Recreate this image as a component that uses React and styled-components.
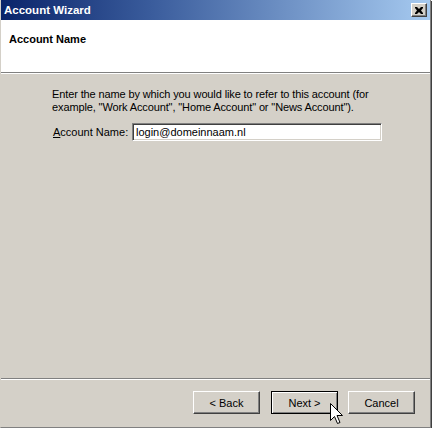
import React from "react";
import styled, { createGlobalStyle } from "styled-components";

const GlobalStyle = createGlobalStyle`
  html, body {
    margin: 0;
    padding: 0;
    background: #ffffff;
  }
  body {
    font-family: "Liberation Sans", Arial, sans-serif;
    font-size: 11px;
    color: #000;
  }
`;

const Window = styled.div`
  position: relative;
  width: 429px;
  height: 427px;
  display: flex;
  flex-direction: column;
  background: #d4d0c8;
  border-left: 1px solid #d4d0c8;
  border-right: 1px solid #808080;
  border-bottom: 1px solid #808080;
  box-shadow: 1px 1px 0 #404040;
`;

const TitleBar = styled.div`
  height: 20px;
  display: flex;
  align-items: center;
  justify-content: space-between;
  padding: 0 3px 0 3px;
  background: linear-gradient(to right, #0a246a 0%, #3a5c9c 35%, #a6caf0 100%);
`;

const Title = styled.span`
  color: #fff;
  font-weight: bold;
  font-size: 11.5px;
`;

const CloseButton = styled.div`
  width: 16px;
  height: 14px;
  box-sizing: border-box;
  background: #d4d0c8;
  border-top: 1px solid #fff;
  border-left: 1px solid #fff;
  border-right: 1px solid #404040;
  border-bottom: 1px solid #404040;
  box-shadow: inset -1px -1px 0 #808080;
  display: flex;
  align-items: center;
  justify-content: center;
`;

const Header = styled.div`
  height: 53px;
  box-sizing: border-box;
  background: #fff;
  padding: 13px 8px 0;
  border-bottom: 1px solid #808080;
  box-shadow: 0 1px 0 #fff;
`;

const HeaderTitle = styled.div`
  font-weight: bold;
  font-size: 11px;
`;

const Body = styled.div`
  flex: 1;
  padding: 15px 0 0 51px;
  display: flex;
  flex-direction: column;
`;

const Intro = styled.p`
  margin: 0;
  width: 340px;
  line-height: 13px;
  letter-spacing: -0.12px;
`;

const FieldRow = styled.div`
  display: flex;
  align-items: center;
  margin-top: 9px;
`;

const Label = styled.label`
  width: 79px;
  padding-left: 1px;
  span {
    text-decoration: underline;
  }
`;

const TextBox = styled.div`
  width: 250px;
  height: 18px;
  box-sizing: border-box;
  background: #fff;
  border-top: 1px solid #808080;
  border-left: 1px solid #808080;
  border-right: 1px solid #fff;
  border-bottom: 1px solid #fff;
  box-shadow: inset 1px 1px 0 #404040, inset -1px -1px 0 #d4d0c8;
  padding: 2px 3px;
  line-height: 13px;
`;

const Footer = styled.div`
  height: 49px;
  border-top: 1px solid #808080;
  box-shadow: inset 0 1px 0 #fff;
  display: flex;
  justify-content: flex-end;
  align-items: flex-start;
  padding: 12px 15px 0 0;
  box-sizing: border-box;
`;

const Button = styled.div`
  width: 67px;
  height: 23px;
  box-sizing: border-box;
  margin-left: ${(p) => p.$gap || 0}px;
  display: flex;
  align-items: center;
  justify-content: center;
  background: #d4d0c8;
  border-top: 1px solid ${(p) => (p.$default ? "#000" : "#fff")};
  border-left: 1px solid ${(p) => (p.$default ? "#000" : "#fff")};
  border-right: 1px solid #404040;
  border-bottom: 1px solid #404040;
  box-shadow: ${(p) =>
    p.$default
      ? "inset 1px 1px 0 #fff, inset -1px -1px 0 #808080"
      : "inset -1px -1px 0 #808080"};
  ${(p) => p.$default && "outline: 1px solid #000; outline-offset: -1px;"}
`;

const Cursor = styled.svg`
  position: absolute;
  left: 329px;
  top: 403px;
`;

export default function App() {
  return (
    <>
      <GlobalStyle />
      <Window>
        <TitleBar>
          <Title>Account Wizard</Title>
          <CloseButton>
            <svg width="8" height="7" viewBox="0 0 8 7">
              <path d="M0 0h2l2 2 2-2h2v1L6 3.5 8 6v1H6L4 5 2 7H0V6l2-2.5L0 1z" fill="#000" />
            </svg>
          </CloseButton>
        </TitleBar>
        <Header>
          <HeaderTitle>Account Name</HeaderTitle>
        </Header>
        <Body>
          <Intro>
            Enter the name by which you would like to refer to this account (for
            example, "Work Account", "Home Account" or "News Account").
          </Intro>
          <FieldRow>
            <Label>
              <span>A</span>ccount Name:
            </Label>
            <TextBox>login@domeinnaam.nl</TextBox>
          </FieldRow>
        </Body>
        <Footer>
          <Button>&lt; Back</Button>
          <Button $gap={11} $default>
            Next &gt;
          </Button>
          <Button $gap={10}>Cancel</Button>
        </Footer>
        <Cursor width="13" height="22" viewBox="0 0 13 22">
          <path
            d="M0.5 0.5v17l4-4 3 7 2.5-1-3-7h5.5z"
            fill="#fff"
            stroke="#000"
            strokeWidth="1"
          />
        </Cursor>
      </Window>
    </>
  );
}
